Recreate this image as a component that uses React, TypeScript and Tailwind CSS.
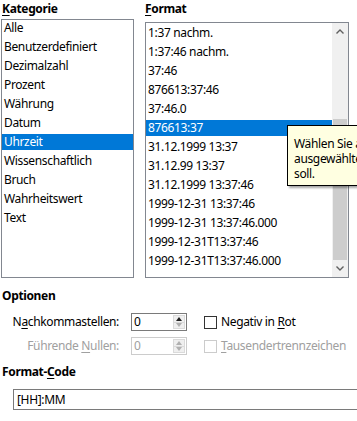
import React from "react";

const kategorien = [
  "Alle",
  "Benutzerdefiniert",
  "Dezimalzahl",
  "Prozent",
  "Währung",
  "Datum",
  "Uhrzeit",
  "Wissenschaftlich",
  "Bruch",
  "Wahrheitswert",
  "Text",
];

const formate = [
  "1:37 nachm.",
  "1:37:46 nachm.",
  "37:46",
  "876613:37:46",
  "37:46.0",
  "876613:37",
  "31.12.1999 13:37",
  "31.12.99 13:37",
  "31.12.1999 13:37:46",
  "1999-12-31 13:37:46",
  "1999-12-31 13:37:46.000",
  "1999-12-31T13:37:46",
  "1999-12-31T13:37:46.000",
];

// one entry of a listbox, highlight is a bit shorter than the row pitch
function ListRow({ label, selected }: { label: string; selected?: boolean }) {
  return (
    <div className="h-[19px] flex items-start">
      <div
        className={
          "h-[16px] w-full flex items-center px-[2px] whitespace-nowrap " +
          (selected ? "bg-[#0078d7] text-white" : "")
        }
      >
        {label}
      </div>
    </div>
  );
}

function SpinBox({ disabled }: { disabled?: boolean }) {
  return (
    <div
      className={
        "w-[56px] h-[18px] flex items-center border bg-white " +
        (disabled ? "border-[#cccccc] text-[#a0a0a0]" : "border-[#7a7a7a] text-black")
      }
    >
      <span className="flex-1 pl-[2px] leading-none">0</span>
      <div className="w-[12px] h-full flex flex-col mr-[1px] py-[1px]">
        <div className="flex-1 flex items-center justify-center bg-[#efefef] border border-[#dadada]">
          <svg width="6" height="4" viewBox="0 0 6 4">
            <polygon points="0,4 3,0 6,4" fill={disabled ? "#b0b0b0" : "#202020"} />
          </svg>
        </div>
        <div className="flex-1 flex items-center justify-center bg-[#efefef] border border-[#dadada] border-t-0">
          <svg width="6" height="4" viewBox="0 0 6 4">
            <polygon points="0,0 6,0 3,4" fill="#b0b0b0" />
          </svg>
        </div>
      </div>
    </div>
  );
}

function CheckBox({ disabled }: { disabled?: boolean }) {
  return (
    <div
      className={
        "w-[13px] h-[13px] border bg-white " + (disabled ? "border-[#cccccc]" : "border-[#333333]")
      }
    />
  );
}

export default function App() {
  return (
    <div
      className="relative w-[357px] h-[421px] overflow-hidden bg-white text-[12px] tracking-[-0.35px] text-black"
      style={{ fontFamily: '"Noto Sans", "Open Sans", sans-serif' }}
    >
      <div className="flex">
        {/* Kategorie */}
        <div className="flex flex-col">
          <div className="h-[19px] pl-[2px] pt-[1px] font-bold leading-[16px]">
            <span className="underline underline-offset-2">K</span>ategorie
          </div>
          <div className="ml-[1px] w-[133px] h-[259px] border border-[#828790] overflow-hidden">
            {kategorien.map((k) => (
              <ListRow key={k} label={k} selected={k === "Uhrzeit"} />
            ))}
          </div>
        </div>

        {/* Format */}
        <div className="ml-[11px] flex flex-col">
          <div className="h-[22px] pt-[1px] font-bold leading-[16px]">
            <span className="underline underline-offset-2">F</span>ormat
          </div>
          <div className="w-[204px] h-[256px] border border-[#828790] flex">
            <div className="flex-1 pt-[2px] overflow-hidden">
              {formate.map((f) => (
                <ListRow key={f} label={f} selected={f === "876613:37"} />
              ))}
            </div>
            <div className="w-[16px] bg-[#f0f0f0] flex flex-col">
              <div className="h-[17px] flex items-center justify-center">
                <svg width="8" height="5" viewBox="0 0 8 5">
                  <polyline points="0.5,4.5 4,1 7.5,4.5" fill="none" stroke="#606060" strokeWidth="1.4" />
                </svg>
              </div>
              <div className="flex-1 flex flex-col justify-end px-[1px]">
                <div className="h-[141px] bg-[#cdcdcd]" />
              </div>
              <div className="h-[17px] flex items-center justify-center">
                <svg width="8" height="5" viewBox="0 0 8 5">
                  <polyline points="0.5,0.5 4,4 7.5,0.5" fill="none" stroke="#606060" strokeWidth="1.4" />
                </svg>
              </div>
            </div>
          </div>
        </div>
      </div>

      {/* Optionen */}
      <div className="mt-[10px] pl-[2px] font-bold leading-[16px]">Optionen</div>
      <div className="mt-[9px] flex flex-col gap-[6px]">
        <div className="flex items-center h-[18px]">
          <div className="w-[119px] text-right whitespace-nowrap">
            N<span className="underline underline-offset-2">a</span>chkommastellen:
          </div>
          <div className="ml-[12px]">
            <SpinBox />
          </div>
          <div className="ml-[17px] flex items-center gap-[4px]">
            <CheckBox />
            <span>
              Negativ in <span className="underline underline-offset-2">R</span>ot
            </span>
          </div>
        </div>
        <div className="flex items-center h-[18px] text-[#a0a0a0]">
          <div className="w-[119px] text-right whitespace-nowrap">
            Führende <span className="underline underline-offset-2">N</span>ullen:
          </div>
          <div className="ml-[12px]">
            <SpinBox disabled />
          </div>
          <div className="ml-[17px] flex items-center gap-[4px]">
            <CheckBox disabled />
            <span>
              <span className="underline underline-offset-2">T</span>ausendertrennzeichen
            </span>
          </div>
        </div>
      </div>

      {/* Format-Code */}
      <div className="mt-[9px] pl-[2px] font-bold leading-[16px]">
        Format-<span className="underline underline-offset-2">C</span>ode
      </div>
      <div className="mt-[9px] ml-[13px] w-[360px] h-[21px] border border-[#7a7a7a] flex items-center pl-[3px]">
        [HH]:MM
      </div>

      {/* tooltip over the format list, cut off by the window edge */}
      <div className="absolute left-[287px] top-[125px] w-[220px] h-[61px] bg-[#ffffe1] border border-black shadow-[2px_2px_2px_rgba(0,0,0,0.35)] pl-[6px] pt-[10px] leading-[15px] whitespace-nowrap">
        Wählen Sie aus, wie der Inhalt der
        <br />
        ausgewählten Zelle(n) angezeigt werden
        <br />
        soll.
      </div>
    </div>
  );
}
